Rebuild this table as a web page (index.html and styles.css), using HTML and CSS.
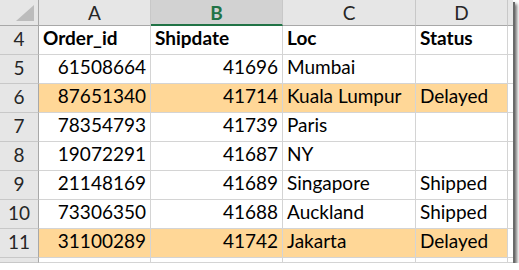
FILE: index.html
```html
<!DOCTYPE html>
<html>
<head>
<meta charset="utf-8">
<link rel="stylesheet" href="styles.css">
</head>
<body>
<div class="frame">
  <div class="sheet">
    <div class="ch corner"><svg class="tri" width="20" height="17" viewBox="0 0 20 17"><polygon points="19,0 19,16 1,16" fill="#bcbcbc"/></svg></div>
    <div class="ch">A</div>
    <div class="ch sel">B</div>
    <div class="ch">C</div>
    <div class="ch">D</div>
    <div class="ch"></div>

    <div class="rh">4</div>
    <div class="c b">Order_id</div>
    <div class="c b">Shipdate</div>
    <div class="c b">Loc</div>
    <div class="c b">Status</div>
    <div class="c"></div>

    <div class="rh">5</div>
    <div class="c n">61508664</div>
    <div class="c n">41696</div>
    <div class="c">Mumbai</div>
    <div class="c"></div>
    <div class="c"></div>

    <div class="rh">6</div>
    <div class="c n hl">87651340</div>
    <div class="c n hl">41714</div>
    <div class="c hl">Kuala Lumpur</div>
    <div class="c hl">Delayed</div>
    <div class="c"></div>

    <div class="rh">7</div>
    <div class="c n">78354793</div>
    <div class="c n">41739</div>
    <div class="c">Paris</div>
    <div class="c"></div>
    <div class="c"></div>

    <div class="rh">8</div>
    <div class="c n">19072291</div>
    <div class="c n">41687</div>
    <div class="c">NY</div>
    <div class="c"></div>
    <div class="c"></div>

    <div class="rh">9</div>
    <div class="c n">21148169</div>
    <div class="c n">41689</div>
    <div class="c">Singapore</div>
    <div class="c">Shipped</div>
    <div class="c"></div>

    <div class="rh">10</div>
    <div class="c n">73306350</div>
    <div class="c n">41688</div>
    <div class="c">Auckland</div>
    <div class="c">Shipped</div>
    <div class="c"></div>

    <div class="rh">11</div>
    <div class="c n hl">31100289</div>
    <div class="c n hl">41742</div>
    <div class="c hl">Jakarta</div>
    <div class="c hl">Delayed</div>
    <div class="c"></div>

    <div class="rh"></div>
    <div class="c"></div>
    <div class="c"></div>
    <div class="c"></div>
    <div class="c"></div>
    <div class="c"></div>
  </div>
</div>
</body>
</html>
```
FILE: styles.css
```css
* { box-sizing: border-box; }
html, body { margin: 0; padding: 0; background: #fff; }
body { font-family: Lato, "Liberation Sans", sans-serif; font-size: 19px; color: #000; }

.frame {
  width: 513px;
  height: 263px;
  overflow: hidden;
  background: #fff;
  box-shadow: 2px 2px 0 #6a6a6a, 4px 4px 3px rgba(0,0,0,0.55);
}

.sheet {
  display: grid;
  grid-template-columns: 39px 112px 132px 133px 92px 1fr;
  grid-template-rows: 26px repeat(8, 29px) 1fr;
  height: 263px;
}

.ch {
  background: #e6e6e6;
  border-right: 1px solid #c8c8c8;
  border-bottom: 1px solid #a8a8a8;
  color: #262626;
  text-align: center;
  line-height: 24px;
  padding-top: 1px;
}
.ch.sel {
  background: #d2d2d2;
  color: #217346;
  font-weight: bold;
  border-bottom: 2px solid #217346;
}
.corner {
  position: relative;
  border-right: 1px solid #a8a8a8;
}
.tri { position: absolute; right: 3px; bottom: 3px; }

.rh {
  background: #e6e6e6;
  border-right: 1px solid #a8a8a8;
  border-bottom: 1px solid #c8c8c8;
  color: #262626;
  text-align: center;
  line-height: 24px;
  padding-top: 1px;
}

.c {
  border-right: 1px solid #d4d4d4;
  border-bottom: 1px solid #d4d4d4;
  line-height: 24px;
  padding: 0 4px;
  white-space: nowrap;
  overflow: hidden;
}
.c.n { text-align: right; }
.c.b { font-weight: bold; }
.c.hl { background: #ffd797; }
```
